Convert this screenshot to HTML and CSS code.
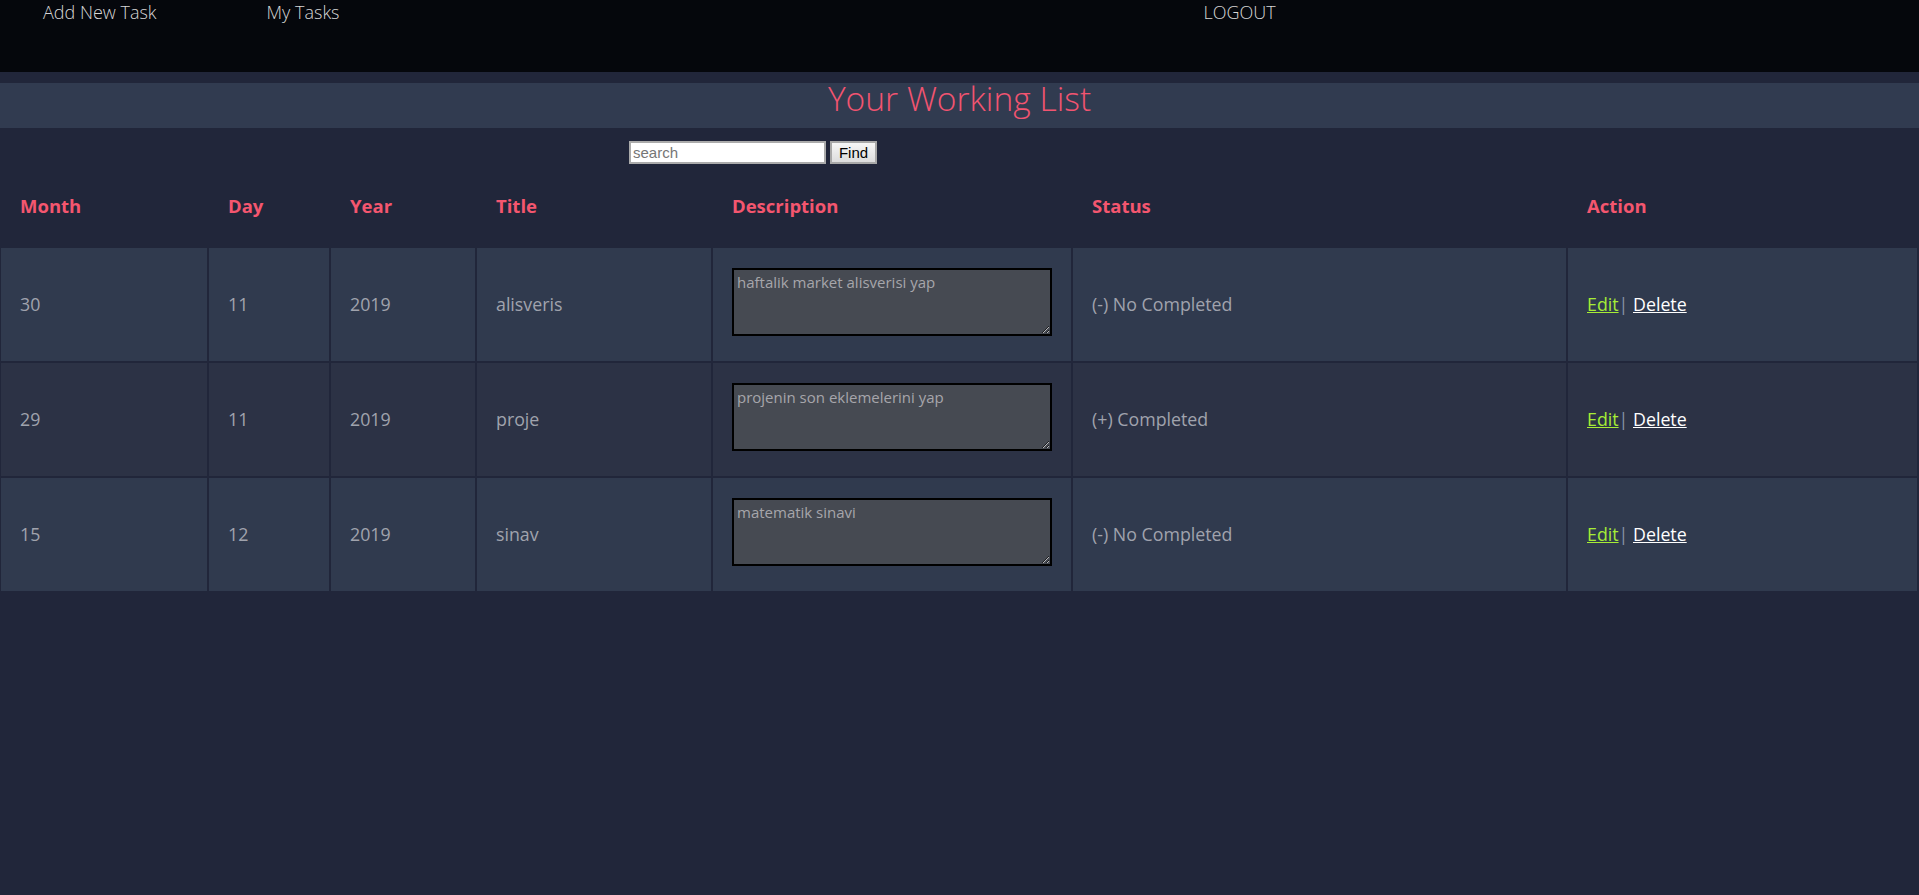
FILE: index.html
```html
<!DOCTYPE html>
<html lang="tr">
<head>
<meta charset="utf-8">
<title>Your Working List</title>
<link rel="stylesheet" href="styles.css">
</head>
<body>
<nav class="topbar">
  <a class="nav-link nav-add" href="#">Add New Task</a>
  <a class="nav-link nav-tasks" href="#">My Tasks</a>
  <a class="nav-link nav-logout" href="#">LOGOUT</a>
</nav>
<main class="page">
  <h1 class="page-title">Your Working List</h1>
  <form class="search-form" onsubmit="return false">
    <input class="search-input" type="text" placeholder="search">
    <button class="search-btn" type="submit">Find</button>
  </form>
  <table class="tasks">
    <colgroup>
      <col class="col-month">
      <col class="col-day">
      <col class="col-year">
      <col class="col-title">
      <col class="col-desc">
      <col class="col-status">
      <col class="col-action">
    </colgroup>
    <thead>
      <tr>
        <th>Month</th>
        <th>Day</th>
        <th>Year</th>
        <th>Title</th>
        <th>Description</th>
        <th>Status</th>
        <th>Action</th>
      </tr>
    </thead>
    <tbody>
      <tr class="row-a">
        <td>30</td>
        <td>11</td>
        <td>2019</td>
        <td>alisveris</td>
        <td><textarea class="desc">haftalik market alisverisi yap</textarea></td>
        <td>(-) No Completed</td>
        <td><a class="link-edit" href="#">Edit</a><span class="sep">|</span> <a class="link-delete" href="#">Delete</a></td>
      </tr>
      <tr class="row-b">
        <td>29</td>
        <td>11</td>
        <td>2019</td>
        <td>proje</td>
        <td><textarea class="desc">projenin son eklemelerini yap</textarea></td>
        <td>(+) Completed</td>
        <td><a class="link-edit" href="#">Edit</a><span class="sep">|</span> <a class="link-delete" href="#">Delete</a></td>
      </tr>
      <tr class="row-a">
        <td>15</td>
        <td>12</td>
        <td>2019</td>
        <td>sinav</td>
        <td><textarea class="desc">matematik sinavi</textarea></td>
        <td>(-) No Completed</td>
        <td><a class="link-edit" href="#">Edit</a><span class="sep">|</span> <a class="link-delete" href="#">Delete</a></td>
      </tr>
    </tbody>
  </table>
</main>
</body>
</html>
```

FILE: styles.css
```css
html, body {
  margin: 0;
  padding: 0;
}

body {
  background: #21263a;
  font-family: "Open Sans", "Noto Sans", sans-serif;
  color: #a0a3ad;
  overflow: hidden;
}

.topbar {
  height: 72px;
  background: #05070c;
  display: flex;
  align-items: flex-start;
}

.nav-link {
  font-size: 18px;
  font-weight: 300;
  line-height: 24px;
  color: #d6d6d6;
  text-decoration: none;
}

.nav-add {
  margin-left: 43px;
}

.nav-tasks {
  margin-left: 110px;
}

.nav-logout {
  margin-left: 864px;
}

.page-title {
  margin: 11px 0 0;
  height: 45px;
  background: #313b50;
  color: #f25470;
  font-size: 33.6px;
  font-weight: 300;
  line-height: 31px;
  text-align: center;
}

.search-form {
  margin: 13px 0 0;
  padding-left: 629px;
  height: 23px;
  display: flex;
  gap: 4px;
}

.search-input {
  box-sizing: border-box;
  width: 197px;
  height: 23px;
  margin: 0;
  padding: 0 2px;
  border: 2px solid #ababab;
  background: #fff;
  font-family: "Liberation Sans", Arial, sans-serif;
  font-size: 15px;
  font-weight: 400;
  color: #222;
}

.search-input::placeholder {
  color: #767676;
}

.search-btn {
  box-sizing: border-box;
  width: 47px;
  height: 23px;
  margin: 0;
  padding: 0;
  border: 2px solid #a8a8a8;
  background: linear-gradient(#f6f6f6, #dddddd);
  font-family: "Liberation Sans", Arial, sans-serif;
  font-size: 15px;
  font-weight: 400;
  color: #000;
}

.tasks {
  table-layout: fixed;
  width: 1920px;
  margin-left: -1px;
  border-collapse: separate;
  border-spacing: 2px;
}

.col-month { width: 206px; }
.col-day { width: 120px; }
.col-year { width: 144px; }
.col-title { width: 234px; }
.col-desc { width: 358px; }
.col-status { width: 493px; }
.col-action { width: 349px; }

.tasks th {
  height: 78px;
  padding: 0 19px 2px;
  text-align: left;
  vertical-align: middle;
  font-size: 18.5px;
  font-weight: 700;
  color: #f4566f;
}

.tasks td {
  height: 111px;
  padding: 0 19px 2px;
  vertical-align: middle;
  font-size: 17.8px;
  color: #a0a3ad;
}

.row-a td {
  background: #303a4e;
}

.row-b td {
  background: #2c3245;
}

.desc {
  display: block;
  box-sizing: border-box;
  width: 320px;
  height: 68px;
  margin: 0 0 4px;
  padding: 2px 3px;
  border: 2px solid #000;
  background: #464a52;
  color: #a6a6ab;
  font-family: "Open Sans", "Noto Sans", sans-serif;
  font-size: 15px;
  line-height: 20px;
}

.link-edit {
  color: #a6ec36;
  text-decoration: underline;
}

.sep {
  color: #8892a4;
}

.link-delete {
  color: #ffffff;
  text-decoration: underline;
}
```
